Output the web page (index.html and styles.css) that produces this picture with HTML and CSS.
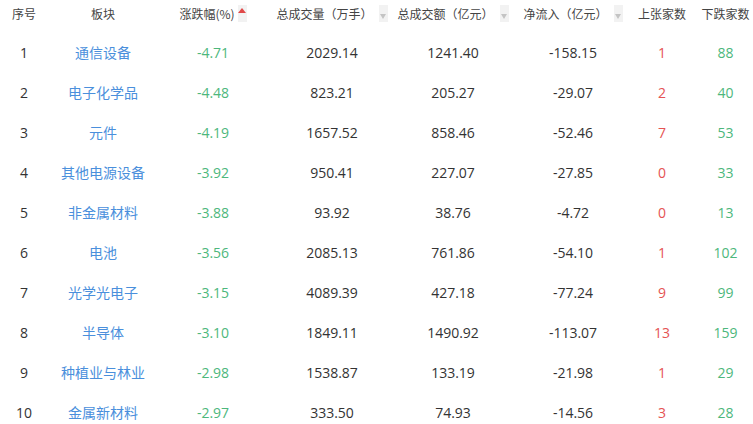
FILE: index.html
```html
<!DOCTYPE html>
<html lang="zh">
<head>
<meta charset="utf-8">
<title>板块资金</title>
<link rel="stylesheet" href="styles.css">
</head>
<body>
<div class="table">
  <div class="row head">
    <div class="cell">序号</div>
    <div class="cell">板块</div>
    <div class="cell">涨跌幅(%)<span class="sort up"></span></div>
    <div class="cell">总成交量（万手）<span class="sort down"></span></div>
    <div class="cell">总成交额（亿元）<span class="sort down"></span></div>
    <div class="cell">净流入（亿元）<span class="sort down"></span></div>
    <div class="cell">上张家数</div>
    <div class="cell">下跌家数</div>
  </div>
  <div class="body">
    <div class="row"><div class="cell">1</div><div class="cell name">通信设备</div><div class="cell fall">-4.71</div><div class="cell">2029.14</div><div class="cell">1241.40</div><div class="cell">-158.15</div><div class="cell rise">1</div><div class="cell fall">88</div></div>
    <div class="row"><div class="cell">2</div><div class="cell name">电子化学品</div><div class="cell fall">-4.48</div><div class="cell">823.21</div><div class="cell">205.27</div><div class="cell">-29.07</div><div class="cell rise">2</div><div class="cell fall">40</div></div>
    <div class="row"><div class="cell">3</div><div class="cell name">元件</div><div class="cell fall">-4.19</div><div class="cell">1657.52</div><div class="cell">858.46</div><div class="cell">-52.46</div><div class="cell rise">7</div><div class="cell fall">53</div></div>
    <div class="row"><div class="cell">4</div><div class="cell name">其他电源设备</div><div class="cell fall">-3.92</div><div class="cell">950.41</div><div class="cell">227.07</div><div class="cell">-27.85</div><div class="cell rise">0</div><div class="cell fall">33</div></div>
    <div class="row"><div class="cell">5</div><div class="cell name">非金属材料</div><div class="cell fall">-3.88</div><div class="cell">93.92</div><div class="cell">38.76</div><div class="cell">-4.72</div><div class="cell rise">0</div><div class="cell fall">13</div></div>
    <div class="row"><div class="cell">6</div><div class="cell name">电池</div><div class="cell fall">-3.56</div><div class="cell">2085.13</div><div class="cell">761.86</div><div class="cell">-54.10</div><div class="cell rise">1</div><div class="cell fall">102</div></div>
    <div class="row"><div class="cell">7</div><div class="cell name">光学光电子</div><div class="cell fall">-3.15</div><div class="cell">4089.39</div><div class="cell">427.18</div><div class="cell">-77.24</div><div class="cell rise">9</div><div class="cell fall">99</div></div>
    <div class="row"><div class="cell">8</div><div class="cell name">半导体</div><div class="cell fall">-3.10</div><div class="cell">1849.11</div><div class="cell">1490.92</div><div class="cell">-113.07</div><div class="cell rise">13</div><div class="cell fall">159</div></div>
    <div class="row"><div class="cell">9</div><div class="cell name">种植业与林业</div><div class="cell fall">-2.98</div><div class="cell">1538.87</div><div class="cell">133.19</div><div class="cell">-21.98</div><div class="cell rise">1</div><div class="cell fall">29</div></div>
    <div class="row"><div class="cell">10</div><div class="cell name">金属新材料</div><div class="cell fall">-2.97</div><div class="cell">333.50</div><div class="cell">74.93</div><div class="cell">-14.56</div><div class="cell rise">3</div><div class="cell fall">28</div></div>
  </div>
</div>
</body>
</html>
```

FILE: styles.css
```css
html, body {
  margin: 0;
  padding: 0;
  background: #ffffff;
  overflow: hidden;
}
body {
  width: 753px;
  height: 424px;
  font-family: "Open Sans", "Noto Sans CJK SC", sans-serif;
  color: #333333;
}
.table {
  width: 763px;
}
.row {
  display: grid;
  grid-template-columns: 48px 110px 110px 128px 114px 126px 52px 75px;
  height: 40px;
  align-items: center;
  font-size: 14px;
}
.cell {
  display: flex;
  align-items: center;
  justify-content: center;
  white-space: nowrap;
}
.head {
  height: 26px;
  font-size: 12px;
  color: #444444;
  font-family: "Noto Sans CJK SC", sans-serif;
}
.body {
  margin-top: 6px;
}
.name {
  color: #4a8fdc;
  font-family: "Noto Sans CJK SC", sans-serif;
}
.fall {
  color: #4db77c;
}
.rise {
  color: #e55353;
}
.sort {
  position: relative;
  display: inline-block;
  width: 9px;
  height: 17px;
  margin-left: 6px;
  background: #f2f2f2;
}
.sort.up {
  margin-left: 3px;
}
.sort.up::after {
  content: "";
  position: absolute;
  left: 0;
  top: 3px;
  border-left: 4.5px solid transparent;
  border-right: 4.5px solid transparent;
  border-bottom: 5px solid #e04848;
}
.sort.down::after {
  content: "";
  position: absolute;
  left: 1px;
  top: 9px;
  border-left: 3.5px solid transparent;
  border-right: 3.5px solid transparent;
  border-top: 5px solid #c4c4c4;
}
```
